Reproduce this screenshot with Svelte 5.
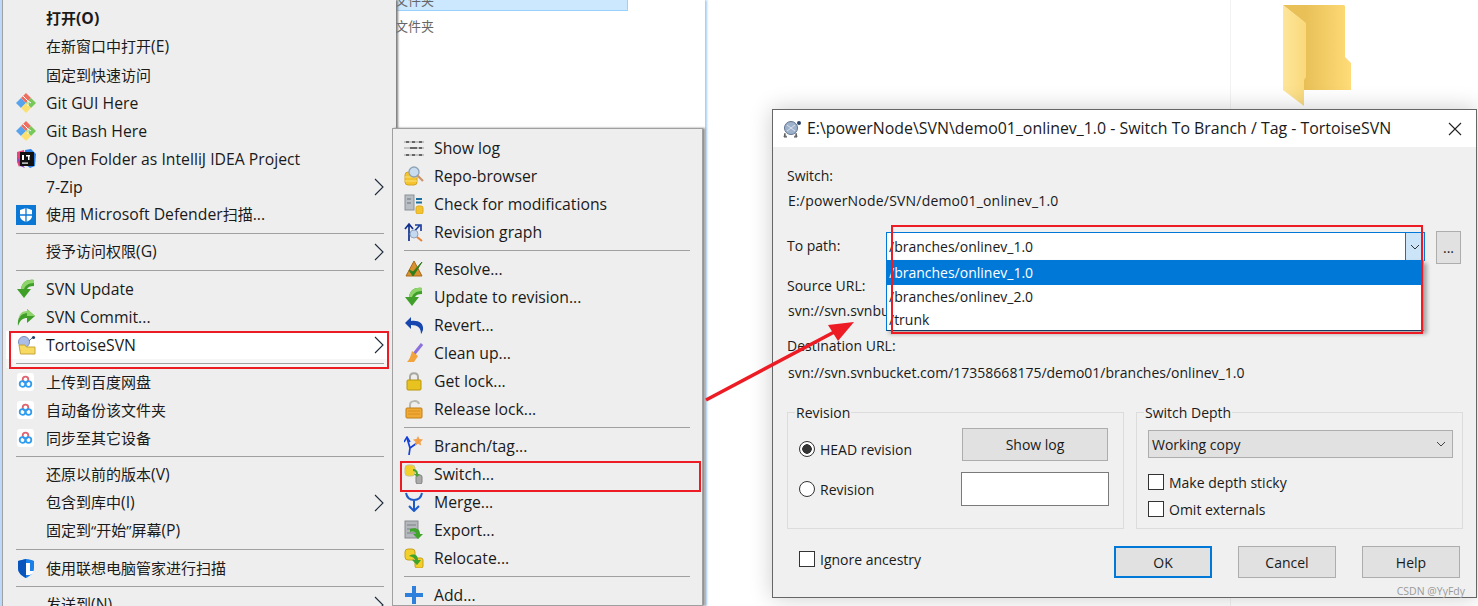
<script>
  const git = `<path d="M0 10l5-5 5 5-5 5z" fill="#57a3ec"/><path d="M5 5l5-5 5 5-5 5z" fill="#ee6f62"/><path d="M10 10l5-5 5 5-5 5z" fill="#78c85a"/><path d="M5 15l5-5 5 5-5 5z" fill="#f9e070"/><path d="M7 3l5 5v5M12 8l3 2" stroke="#fff" stroke-width="1" fill="none"/>`
  const idea = `<path d="M1 3l7-2 1 8-6 9-2-5z" fill="#ef3f7c"/><path d="M9 1l6-1 5 5-1 12-5 2-5-4z" fill="#2f7fe8"/><path d="M1 8l3 9 5 2z" fill="#8a3fd0"/><rect x="4" y="3" width="14" height="14" fill="#111"/><rect x="6" y="6" width="2" height="5" fill="#fff"/><rect x="10" y="6" width="4" height="1.5" fill="#fff"/><rect x="12" y="6" width="1.5" height="5" fill="#fff"/><rect x="6" y="13.500" width="6" height="1.200" fill="#fff"/>`
  const defender = `<rect width="20" height="20" fill="#0a78d4"/><path d="M10 3l6 2v6c0 3-3 5-6 6-3-1-6-3-6-6V5z" fill="#fff"/><path d="M10 3v14M4 10h12" stroke="#0a78d4" stroke-width="1.300"/>`
  const down = `<path d="M18 1C11 0 6 3 5 10H1l7 9 7-9h-4c1-2 3-3 7-3z" fill="#3f9f28"/><path d="M18 1C11 0 6 3 5 10h3c1-3 4-6 10-6z" fill="#8ed46a"/>`
  const up = `<path d="M2 19C1 12 4 6 11 6V2l8 7-8 7v-5c-4 0-7 2-9 8z" fill="#3f9f28"/><path d="M11 2l8 7h-8V6C7 6 4 8 2.500 13 3 7 6 4 11 4z" fill="#8ed46a"/>`
  const tortoise = `<circle cx="8" cy="7" r="5.500" fill="#a9bde6" stroke="#7b8fb8"/><circle cx="17.500" cy="2.500" r="1.600" fill="#1e3a68"/><path d="M13 6l3-3" stroke="#5a7198"/><path d="M3 10h6l1.500 2H19v7H4.500z" fill="#f7da62" stroke="#c7a53c"/>`
  const baidu = `<rect x="1" y="1" width="17" height="18" rx="3" fill="#fff"/><g fill="none" stroke-width="1.800"><circle cx="9.500" cy="7.500" r="2.800" stroke="#e0646f"/><circle cx="6.500" cy="12" r="2.800" stroke="#2f9cf0"/><circle cx="12.500" cy="12" r="2.800" stroke="#2f9cf0"/></g>`
  const lenovo = `<path d="M2 3l8-2c3 0 6 1 8 2v7c0 5-4 8-8 10-4-2-8-5-8-10z" fill="#1a80e8"/><path d="M2 3l8-2v19c-4-2-8-5-8-10z" fill="#0a55bc"/><path d="M10 5h4v8h4c-1 2-2 3-4 4h-4z" fill="#fff"/>`
  const showlog = `<g fill="none"><path d="M0 4h20M0 10h20M0 17h20" stroke="#999" stroke-width="1"/><path d="M2 4h3M8 4h3M15 4h3M6 10h7M15 10h3M2 17h3M8 17h3M15 17h3" stroke="#666" stroke-width="2"/></g>`
  const repo = `<rect x="1" y="6" width="12" height="13" rx="3" fill="#f4c430" stroke="#d7a521"/><path d="M1 11h12M1 15h12" stroke="#fbe27a"/><circle cx="10" cy="6" r="5" fill="#c9dcf0" stroke="#8fa3b6" stroke-width="1.300"/><path d="M13.500 9.500l5.500 5.500" stroke="#c9956a" stroke-width="2.200"/>`
  const check = `<rect x="1" y="1" width="9" height="15" fill="#b9bec4" stroke="#8c9197"/><path d="M3 5h4M3 9h4" stroke="#6f757b"/><path d="M12 5h6M12 8.500h6" stroke="#1a6f9c" stroke-width="1.800"/><rect x="12" y="12" width="7" height="8" rx="2" fill="#f4c430" stroke="#dcaa20"/>`
  const graph = `<path d="M5 19V3M1 7l4-5 4 5" fill="none" stroke="#11308e" stroke-width="1.700"/><path d="M8 12l8-9M11 3h6v6" fill="none" stroke="#1d3f9e" stroke-width="1.700"/><circle cx="10" cy="12" r="4" fill="#c4d8f0" stroke="#8ea5c0"/><path d="M13 15l5 4" stroke="#e8823a" stroke-width="2"/>`
  const resolve = `<path d="M10 2l8 15H2z" fill="#d9912e" stroke="#a86a1b"/><path d="M5 11l4 6 9-14-9 10z" fill="#2f7d1c" stroke="#2f7d1c"/>`
  const revert = `<path d="M1 8l6-6v4c7-1 13 2 12 9-1 2-1 3-2 4 0-6-3-9-10-9v4z" fill="#1746b0"/>`
  const cleanup = `<path d="M10 11L18 1" stroke="#8a70dc" stroke-width="3"/><path d="M8 8l6 5-4 6H3c2-2 4-6 5-11z" fill="#f2a33c"/>`
  const getlock = `<path d="M6 9V6c0-5 8-5 8 0v3" fill="none" stroke="#a8a8a0" stroke-width="2"/><rect x="3" y="9" width="14" height="10" rx="1" fill="#e8c21e" stroke="#b8960e"/>`
  const release = `<path d="M6 9V6c0-5 8-5 9-1" fill="none" stroke="#b8b8b0" stroke-width="2"/><rect x="2" y="9" width="16" height="10" rx="1" fill="#f0aa34" stroke="#c27e18"/><path d="M4 12h12M4 15h12" stroke="#d98e20"/>`
  const branch = `<path d="M5 19l1-7M6 12L3 2M6 12l7-5" fill="none" stroke="#1240d8" stroke-width="1.700"/><path d="M0 6l3-5 3 5" fill="none" stroke="#1240d8" stroke-width="1.500"/><path d="M14 0l1.500 3 3.500.5-2.500 2.500.6 3.500-3.100-1.700-3 1.700.6-3.500L9 3.500l3.500-.5z" fill="#f2a04a"/>`
  const swap = `<rect x="1" y="1" width="10" height="11" rx="3" fill="#f2cf2a" stroke="#c9c29a"/><rect x="12" y="11" width="6" height="9" rx="2" fill="#aaa" stroke="#808080"/><path d="M9 5c3 0 5 2 5 5h2l-3 3-3-3h2c0-2-1-3-3-3z" fill="#46a32f"/>`
  const merge = `<path d="M2 1c1 5 4 7 8 7s7-2 8-7M10 8v10" fill="none" stroke="#1d5cc8" stroke-width="2"/><path d="M5 14l5 5 5-5" fill="none" stroke="#1d5cc8" stroke-width="2"/>`
  const exportIcon = `<rect x="1" y="1" width="13" height="17" fill="#b4b8bc" stroke="#868a8e"/><path d="M3 5h9M3 9h9M3 13h9" stroke="#7d8185"/><path d="M6 9c6-2 10 0 10 5h3l-5 5-5-5h3c0-2-2-3-6-2z" fill="#3ea52a"/>`
  const relocate = `<rect x="1" y="1" width="10" height="11" rx="3" fill="#f2cf2a" stroke="#c9a020"/><rect x="11" y="10" width="8" height="10" rx="2" fill="#f2cf2a" stroke="#c9a020"/><path d="M5 8c5-3 9-1 9 4h3l-4 5-5-5h3c0-2-2-3-6-4z" fill="#3ea52a"/>`
  const add = `<path d="M8 1h4v7h7v4h-7v7H8v-7H1V8h7z" fill="#2f7fdc"/>`
  const turtle = `<circle cx="9" cy="9" r="6.500" fill="#9fb2cc" stroke="#5f7290"/><path d="M5 6l8 6M13 6l-8 6" stroke="#d7e0ec"/><circle cx="17" cy="4" r="2" fill="#2a4468"/><path d="M3 14l-1 4h3M14 14l1 4h-3" fill="#7b8794" stroke="#555"/>`

  const leftMenu = [
    { text: '打开(O)', bold: true },
    { text: '在新窗口中打开(E)' },
    { text: '固定到快速访问' },
    { text: 'Git GUI Here', icon: git },
    { text: 'Git Bash Here', icon: git },
    { text: 'Open Folder as IntelliJ IDEA Project', icon: idea },
    { text: '7-Zip', more: true },
    { text: '使用 Microsoft Defender扫描...', icon: defender },
    { sep: true },
    { text: '授予访问权限(G)', more: true },
    { sep: true },
    { text: 'SVN Update', icon: down },
    { text: 'SVN Commit...', icon: up },
    { text: 'TortoiseSVN', icon: tortoise, more: true, hot: true },
    { sep: true, hotsep: true },
    { text: '上传到百度网盘', icon: baidu },
    { text: '自动备份该文件夹', icon: baidu },
    { text: '同步至其它设备', icon: baidu },
    { sep: true },
    { text: '还原以前的版本(V)' },
    { text: '包含到库中(I)', more: true },
    { text: '固定到“开始”屏幕(P)' },
    { sep: true },
    { text: '使用联想电脑管家进行扫描', icon: lenovo },
    { sep: true },
    { text: '发送到(N)', more: true }
  ]

  const subMenu = [
    { text: 'Show log', icon: showlog },
    { text: 'Repo-browser', icon: repo },
    { text: 'Check for modifications', icon: check },
    { text: 'Revision graph', icon: graph },
    { sep: true },
    { text: 'Resolve...', icon: resolve },
    { text: 'Update to revision...', icon: down },
    { text: 'Revert...', icon: revert },
    { text: 'Clean up...', icon: cleanup },
    { text: 'Get lock...', icon: getlock },
    { text: 'Release lock...', icon: release },
    { sep: true },
    { text: 'Branch/tag...', icon: branch },
    { text: 'Switch...', icon: swap },
    { text: 'Merge...', icon: merge },
    { text: 'Export...', icon: exportIcon },
    { text: 'Relocate...', icon: relocate },
    { sep: true },
    { text: 'Add...', icon: add }
  ]

  const hasCjk = (t) => /[^\x00-\x7f]/.test(t)
  const runs = (t) => t.split(/([\x20-\x7e]+)/).filter(Boolean)
</script>

{#snippet menu(items)}
  {#each items as item}
    {#if item.sep}
      <div class="sep" class:hotsep={item.hotsep}><i></i></div>
    {:else}
      <div class="row" class:hot={item.hot} class:bold={item.bold}>
        <svg class="icon" viewBox="0 0 20 20">{#if item.icon}{@html item.icon}{/if}</svg>
        <span class="label" class:cjk={hasCjk(item.text)}>
          {#each runs(item.text) as run}<span class:lat={!hasCjk(run)}>{run}</span>{/each}
        </span>
        {#if item.more}
          <svg class="more" viewBox="0 0 10 18"><path d="M1 1l8 8-8 8" fill="none" stroke="#1c2a3a" stroke-width="1.100"/></svg>
        {/if}
      </div>
    {/if}
  {/each}
{/snippet}

<div class="desk">
  <div class="explorer">
    <div class="files">
      <div class="file selected">文件夹</div>
      <div class="file">文件夹</div>
    </div>
  </div>

  <div class="divider"></div>

  <svg class="folder" viewBox="0 0 70 104">
    <defs>
      <linearGradient id="back" x1="0" x2="1" y1="0" y2="0"><stop offset="0.33" stop-color="#e9c058"/><stop offset="1" stop-color="#ffdc78"/></linearGradient>
      <linearGradient id="flap" x1="0" x2="1" y1="0" y2="0"><stop offset="0" stop-color="#fde59a"/><stop offset="1" stop-color="#f9d97a"/></linearGradient>
    </defs>
    <path d="M0 0h61l1 1v51l6 6v27H21V17z" fill="url(#back)"/>
    <path d="M0 0l23 18v54l-2 3v26L0 85z" fill="url(#flap)"/>
  </svg>

  <div class="menu left">{@render menu(leftMenu)}</div>
  <div class="menu sub">{@render menu(subMenu)}</div>

  <div class="dialog">
    <div class="title">
      <svg class="ticon" viewBox="0 0 20 20">{@html turtle}</svg>
      <span class="ttext">E:\powerNode\SVN\demo01_onlinev_1.0 - Switch To Branch / Tag - TortoiseSVN</span>
      <svg class="close" viewBox="0 0 14 14"><path d="M1 1l12 12M13 1L1 13" stroke="#222" stroke-width="1.100"/></svg>
    </div>
    <div class="body">
      <div class="line l-switch">Switch:</div>
      <div class="line l-path">E:/powerNode/SVN/demo01_onlinev_1.0</div>
      <div class="pathrow">
        <label for="topath">To path:</label>
        <div class="combo">
          <input id="topath" value="/branches/onlinev_1.0" readonly />
          <div class="dropbtn"><svg viewBox="0 0 10 6"><path d="M1 1l4 4 4-4" fill="none" stroke="#333"/></svg></div>
          <div class="droplist">
            <div class="opt on">/branches/onlinev_1.0</div>
            <div class="opt">/branches/onlinev_2.0</div>
            <div class="opt">/trunk</div>
          </div>
        </div>
        <button class="dots">...</button>
      </div>
      <div class="line l-source">Source URL:</div>
      <div class="line l-src2">svn://svn.svnbu</div>
      <div class="line l-dest">Destination URL:</div>
      <div class="line l-dest2">svn://svn.svnbucket.com/17358668175/demo01/branches/onlinev_1.0</div>

      <div class="groups">
        <div class="group">
          <span class="legend">Revision</span>
          <div class="revrow first">
            <div class="opt-line head"><span class="radio checked"></span>HEAD revision</div>
            <button class="btn showlog">Show log</button>
          </div>
          <div class="revrow second">
            <div class="opt-line"><span class="radio"></span>Revision</div>
            <div class="revinput"></div>
          </div>
        </div>
        <div class="group depth">
          <span class="legend">Switch Depth</span>
          <div class="select">
            <span>Working copy</span>
            <svg viewBox="0 0 10 6"><path d="M1 1l4 4 4-4" fill="none" stroke="#444"/></svg>
          </div>
          <div class="opt-line chk1"><span class="box"></span>Make depth sticky</div>
          <div class="opt-line chk2"><span class="box"></span>Omit externals</div>
        </div>
      </div>

      <div class="footer">
        <div class="opt-line ignore"><span class="box"></span>Ignore ancestry</div>
        <div class="actions">
          <button class="btn def">OK</button>
          <button class="btn">Cancel</button>
          <button class="btn">Help</button>
        </div>
      </div>
    </div>
  </div>

  <div class="mark m-tortoise"></div>
  <div class="mark m-switch"></div>
  <div class="mark m-combo"></div>
  <svg class="arrow" viewBox="0 0 1478 606">
    <path d="M706 400L838 330" stroke="#ed1c24" stroke-width="3.500"/>
    <path d="M854 322L828 325L838 341z" fill="#ed1c24"/>
  </svg>
  <div class="watermark">CSDN @YyFdy</div>
</div>

<style>
  :global(body) {
    background: #fff;
    overflow: hidden;
  }

  .desk {
    position: relative;
    width: 1478px;
    height: 606px;
    overflow: hidden;
    background: #fff;
    color: #1a1a1a;
    font-family: "Open Sans", "Noto Sans CJK SC", sans-serif;
    font-size: 15px;
  }

  .explorer {
    position: absolute;
    left: 0;
    top: 0;
    width: 705px;
    height: 606px;
    background: linear-gradient(90deg, #bcd8fa 2px, #fff 2px);
    box-shadow: 2px 0 2px #a6cdf8;
  }

  .files {
    position: absolute;
    left: 395px;
    top: -10px;
    font-size: 13px;
    color: #666;
  }

  .file {
    width: 233px;
    height: 21px;
    line-height: 21px;
    margin-bottom: 5px;
  }

  .selected {
    background: #cce8ff;
    border: 1px solid #99d1ff;
    border-left: 0;
    line-height: 19px;
    box-sizing: border-box;
  }

  .divider {
    position: absolute;
    left: 1230px;
    top: 0;
    width: 1px;
    height: 606px;
    background: #f2f2f2;
  }

  .folder {
    position: absolute;
    left: 1283px;
    top: 5px;
    width: 70px;
    height: 104px;
  }

  .menu {
    position: absolute;
    top: 0;
    background: #eee;
    box-sizing: border-box;
    overflow: hidden;
  }

  .left {
    left: 2px;
    width: 394px;
    height: 606px;
    padding-top: 5px;
    border-left: 1px solid #a0a0a0;
    box-shadow: 2px 0 2px #7c7c7c;
  }

  .sub {
    left: 392px;
    top: 128px;
    width: 311px;
    height: 478px;
    padding-top: 5px;
    border: 1px solid #a0a0a0;
    box-shadow: 2px 0 2px #8c8c8c;
  }

  .row {
    display: flex;
    align-items: center;
    height: 28px;
    padding: 0 12px 0 13px;
    white-space: nowrap;
  }

  .sub .row {
    padding-left: 11px;
  }

  .bold {
    font-weight: 700;
  }

  .hot {
    margin: 0 9px 0 3px;
    padding: 0 3px 0 10px;
    background: #fff;
  }

  .icon {
    flex: none;
    width: 20px;
    height: 20px;
    margin-right: 10px;
  }

  .label.cjk {
    padding-bottom: 2px;
  }

  .lat {
    font-size: 15.750px;
  }

  .more {
    flex: none;
    width: 10px;
    height: 18px;
    margin-left: auto;
  }

  .sep {
    height: 9px;
    padding: 4px 12px 0 13px;
    box-sizing: border-box;
  }

  .sub .sep {
    padding: 4px 12px 0 11px;
  }

  .sep i {
    display: block;
    height: 1px;
    background: #a0a0a0;
  }

  .hotsep {
    margin: 0 9px 0 3px;
    padding: 4px 3px 0 10px;
    background: #f6f6f6;
  }

  .dialog {
    position: absolute;
    left: 772px;
    top: 109px;
    width: 705px;
    height: 489px;
    box-sizing: border-box;
    background: #f0f0f0;
    border: 1px solid #666;
    box-shadow: 0 0 22px rgba(0, 0, 0, 0.2);
    font-size: 14px;
  }

  .title {
    display: flex;
    align-items: center;
    height: 37px;
    padding: 0 14px 0 9px;
    background: #fff;
    font-size: 15.900px;
  }

  .ticon {
    width: 20px;
    height: 20px;
    margin-right: 5px;
  }

  .ttext {
    white-space: nowrap;
    padding-bottom: 1px;
  }

  .close {
    width: 14px;
    height: 14px;
    margin-left: auto;
  }

  .body {
    padding-left: 14px;
  }

  .line {
    height: 20px;
    line-height: 20px;
    white-space: nowrap;
  }

  .l-switch { padding-top: 19px; }
  .l-path { margin-top: 5px; padding-left: 1px; letter-spacing: 0.2px; }
  .l-source { margin-top: 12px; }
  .l-src2 { margin-top: 5px; padding-left: 1px; }
  .l-dest { margin-top: 15px; }
  .l-dest2 { margin-top: 7px; padding-left: 1px; }

  .pathrow {
    display: flex;
    margin-top: 20px;
    height: 33px;
  }

  .pathrow label {
    width: 99px;
    line-height: 30px;
  }

  .combo {
    position: relative;
    width: 539px;
    height: 29px;
    margin-top: 1px;
    box-sizing: border-box;
    border: 1px solid #0078d7;
    background: #fff;
  }

  .combo input {
    display: block;
    width: 500px;
    height: 27px;
    padding: 0 0 0 2px;
    border: 0;
    outline: 0;
    background: none;
    color: inherit;
    font: inherit;
  }

  .dropbtn {
    position: absolute;
    right: -1px;
    top: -1px;
    display: flex;
    align-items: center;
    justify-content: center;
    width: 20px;
    height: 29px;
    box-sizing: border-box;
    background: #cce4f7;
    border: 1px solid #0078d7;
  }

  .dropbtn svg {
    width: 10px;
    height: 6px;
  }

  .droplist {
    position: absolute;
    left: -1px;
    top: 27px;
    width: 538px;
    height: 71px;
    box-sizing: border-box;
    background: #fff;
    border: 1px solid #0078d7;
    border-top: 0;
    border-right-color: #999;
    border-bottom-color: #1a3a60;
    box-shadow: 3px 3px 4px rgba(0, 0, 0, 0.3);
  }

  .opt {
    height: 23px;
    line-height: 23px;
    padding-left: 2px;
  }

  .opt.on {
    height: 25px;
    line-height: 26px;
    background: #0078d7;
    color: #fff;
  }

  .dots {
    width: 25px;
    height: 33px;
    margin-left: 11px;
    padding: 0;
    box-sizing: border-box;
    background: #e1e1e1;
    border: 1px solid #adadad;
    color: inherit;
    font: inherit;
  }

  .groups {
    display: flex;
    gap: 12px;
    margin-top: 29px;
  }

  .group {
    position: relative;
    width: 337px;
    height: 117px;
    box-sizing: border-box;
    padding-left: 11px;
    border: 1px solid #dcdcdc;
  }

  .group.depth {
    width: 327px;
  }

  .legend {
    position: absolute;
    left: 7px;
    top: -10px;
    height: 20px;
    line-height: 20px;
    padding: 0 1px;
    background: #f0f0f0;
  }

  .revrow {
    display: flex;
    align-items: center;
  }

  .revrow .opt-line {
    width: 162px;
  }

  .first {
    height: 33px;
    margin-top: 15px;
  }

  .second {
    height: 34px;
    margin-top: 11px;
  }

  .head {
    padding-top: 9px;
  }

  .opt-line {
    display: flex;
    align-items: center;
    white-space: nowrap;
  }

  .radio, .box {
    flex: none;
    width: 16px;
    height: 16px;
    margin-right: 5px;
    box-sizing: border-box;
    background: #fff;
    border: 1px solid #333;
  }

  .radio {
    border-radius: 50%;
  }

  .checked {
    background: radial-gradient(circle, #333 0 4.500px, #fff 5px);
  }

  .btn {
    width: 98px;
    height: 32px;
    padding: 0;
    box-sizing: border-box;
    background: #e1e1e1;
    border: 1px solid #adadad;
    color: inherit;
    font: inherit;
  }

  .showlog {
    width: 146px;
    height: 33px;
    margin-left: 1px;
  }

  .revinput {
    width: 148px;
    height: 34px;
    box-sizing: border-box;
    background: #fff;
    border: 1px solid #7a7a7a;
  }

  .select {
    display: flex;
    align-items: center;
    justify-content: space-between;
    width: 305px;
    height: 28px;
    margin-top: 17px;
    padding: 0 6px 0 3px;
    box-sizing: border-box;
    background: #e1e1e1;
    border: 1px solid #adadad;
  }

  .select svg {
    width: 10px;
    height: 6px;
  }

  .chk1, .chk2 {
    height: 16px;
  }

  .chk1 { margin-top: 16px; }
  .chk2 { margin-top: 11px; }

  .footer {
    display: flex;
    margin-top: 17px;
    padding: 0 16px 0 12px;
  }

  .ignore {
    height: 16px;
    margin-top: 5px;
  }

  .actions {
    display: flex;
    gap: 26px;
    margin-left: auto;
  }

  .def {
    border: 2px solid #0078d7;
  }

  .mark {
    position: absolute;
    box-sizing: border-box;
    border: 2px solid #ed1c24;
  }

  .m-tortoise { left: 9px; top: 331px; width: 380px; height: 38px; }
  .m-switch { left: 400px; top: 461px; width: 301px; height: 31px; }
  .m-combo { left: 891px; top: 225px; width: 532px; height: 109px; }

  .arrow {
    position: absolute;
    left: 0;
    top: 0;
    width: 1478px;
    height: 606px;
    pointer-events: none;
  }

  .watermark {
    position: absolute;
    right: 13px;
    top: 584px;
    font-size: 10.500px;
    line-height: 14px;
    color: #9a9a9a;
  }
</style>
